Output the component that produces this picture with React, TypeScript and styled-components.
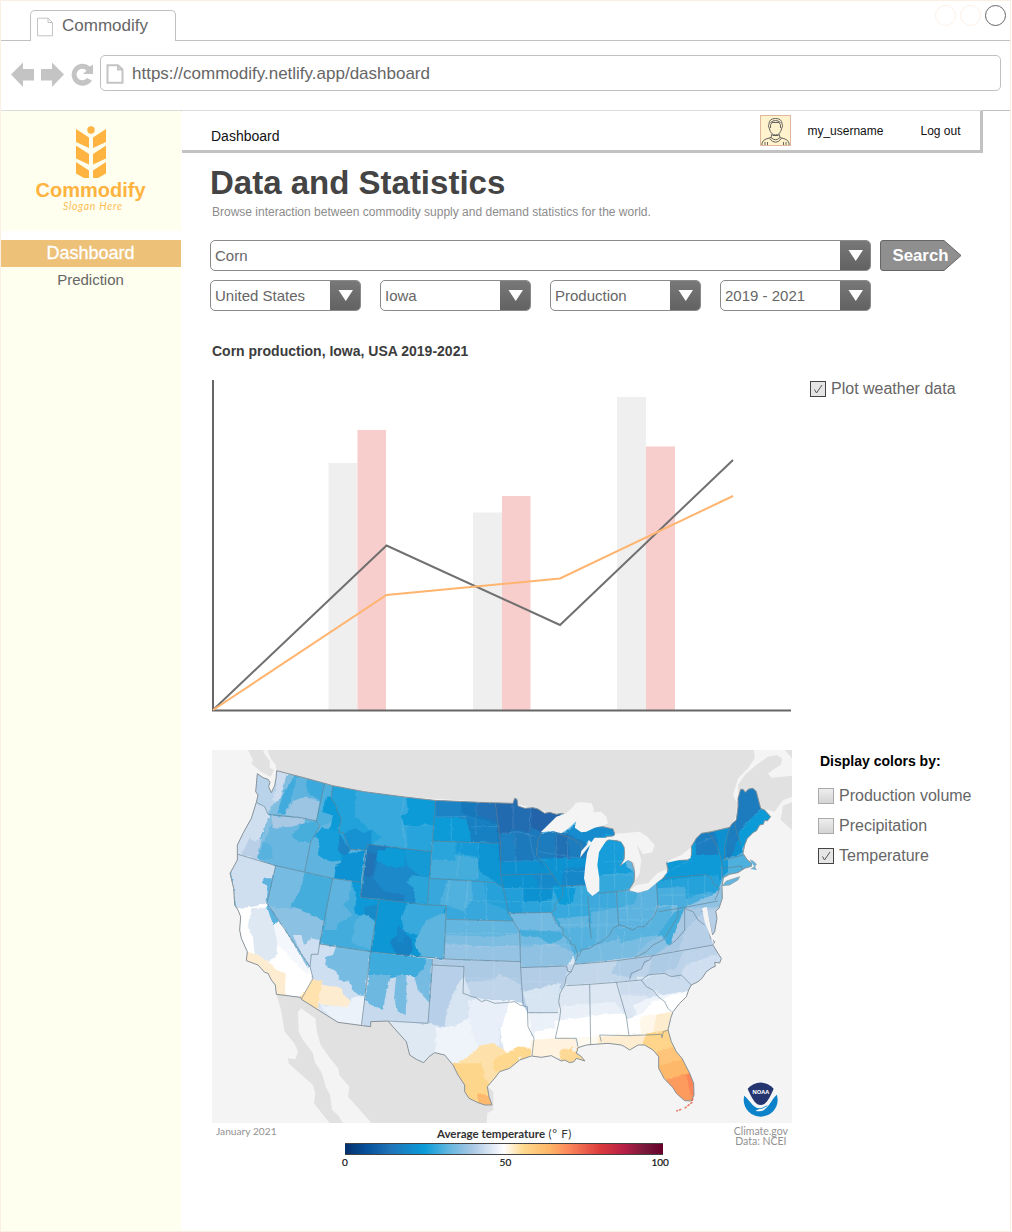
import React from "react";
import styled, { createGlobalStyle } from "styled-components";

const GlobalStyle = createGlobalStyle`
  * { box-sizing: border-box; }
  body { margin: 0; background: #fff; font-family: "Liberation Sans", Arial, sans-serif; color: #666; }
  svg { display: block; flex: none; }
`;

const Window = styled.div`
  width: 1011px;
  height: 1232px;
  border: 1px solid #fbeee2;
  background: #fff;
  display: flex;
  flex-direction: column;
`;

const TabStrip = styled.div`
  height: 40px;
  display: flex;
  justify-content: space-between;
  border-bottom: 1px solid #c0c0c0;
  padding: 0 4px 0 29px;
  flex: none;
`;

const Tab = styled.div`
  width: 146px;
  height: 31px;
  margin-top: 9px;
  border: 1px solid #c0c0c0;
  border-bottom: 0;
  border-radius: 5px 5px 0 0;
  background: #fff;
  display: flex;
  gap: 8px;
  padding: 6px 0 0 5px;
  font-size: 17px;
  line-height: 18px;
`;

const WindowButtons = styled.div`
  display: flex;
  gap: 4px;
  padding-top: 4px;
`;

const Circle = styled.span<{ $color: string }>`
  width: 21px;
  height: 21px;
  border-radius: 50%;
  border: 1px solid ${(p) => p.$color};
`;

const AddressRow = styled.div`
  height: 69px;
  flex: none;
  display: flex;
  align-items: flex-start;
  padding: 14px 9px 0 10px;
`;

const NavIcons = styled.div`
  width: 89px;
  padding-top: 7px;
`;

const AddressBar = styled.div`
  flex: 1;
  height: 36px;
  border: 1px solid #c0c0c0;
  border-radius: 5px;
  display: flex;
  align-items: center;
  gap: 8px;
  padding: 1px 0 0 5px;
  font-size: 17px;
`;

const Page = styled.div`
  flex: 1;
  display: flex;
`;

const Sidebar = styled.aside`
  width: 180px;
  display: flex;
  flex-direction: column;
  background: #feffee;
`;

const Brand = styled.div`
  height: 130px;
  border-bottom: 9px solid #fff;
  border-top: 1px solid #ddd;
  display: flex;
  flex-direction: column;
  align-items: center;
  padding: 15px 1px 0 0;
`;

const BrandName = styled.div`
  font-size: 20px;
  line-height: 22px;
  font-weight: bold;
  color: #ffb340;
`;

const SideItem = styled.a<{ $active?: boolean }>`
  height: 27px;
  line-height: 26px;
  padding-right: 1px;
  text-align: center;
  font-size: ${(p) => (p.$active ? 18 : 15)}px;
  color: ${(p) => (p.$active ? "#fff" : "#666")};
  background: ${(p) => (p.$active ? "#edc178" : "transparent")};
  -webkit-text-stroke: ${(p) => (p.$active ? "0.3px #fff" : "0")};
`;

const Main = styled.main`
  flex: 1;
  border-top: 1px solid #c0c0c0;
`;

const TopBar = styled.header`
  width: 801px;
  height: 43px;
  margin: -1px 0 0 1px;
  border-top: 1px solid #ddd;
  border-right: 3px solid #c2c2c2;
  border-bottom: 3px solid #c2c2c2;
  display: flex;
  align-items: center;
  font-size: 12px;
  line-height: 14px;
  color: #111;
  > svg { margin-bottom: 1px; }
`;

const Crumb = styled.span`
  font-size: 14px;
  line-height: 16px;
  padding: 11px 0 0 29px;
  flex: 1;
`;

const UserName = styled.span`
  margin: 0 37px 0 16px;
`;

const LogOut = styled.span`
  margin-right: 19.500px;
`;

const Content = styled.div`
  padding: 11px 0 0 28px;
`;

const Title = styled.h1`
  margin: 0 0 0 1px;
  font-size: 33px;
  line-height: 38px;
  color: #444;
`;

const Subtitle = styled.p`
  margin: 3px 0 0 3px;
  font-size: 12px;
  line-height: 14px;
  color: #8c8c8c;
`;

const FilterRow = styled.div<{ $top: number; $gap: number }>`
  display: flex;
  gap: ${(p) => p.$gap}px;
  margin: ${(p) => p.$top}px 0 0 1px;
`;

const SelectBox = styled.div<{ $width: number }>`
  width: ${(p) => p.$width}px;
  height: 31px;
  border: 1px solid #8a8a8a;
  border-radius: 5px;
  overflow: hidden;
  display: flex;
  justify-content: space-between;
  font-size: 15px;
  line-height: 30px;
  padding-left: 4px;
`;

const Arrow = styled.span`
  width: 30px;
  background: linear-gradient(#787878, #626262);
  display: flex;
  align-items: center;
  justify-content: center;
  padding-bottom: 1px;
`;

const SearchButton = styled.button`
  width: 82px;
  height: 31px;
  padding: 0;
  border: 0;
  background: none;
  display: grid;
  font: bold 16.800px/31px "Liberation Sans", Arial, sans-serif;
  color: #fff;
  text-align: left;
  > * { grid-area: 1 / 1; }
  > span { padding-left: 12.500px; }
`;

const ChartTitle = styled.h2`
  margin: 32px 0 0 3px;
  font-size: 14px;
  line-height: 16px;
  color: #3c3c3c;
`;

const Split = styled.div<{ $top: number; $gap: number }>`
  display: flex;
  align-items: flex-start;
  gap: ${(p) => p.$gap}px;
  margin: ${(p) => p.$top}px 0 0 3px;
`;

const Options = styled.div`
  display: flex;
  flex-direction: column;
`;

const OptionsTitle = styled.h3`
  margin: 3px 0 12px 2px;
  font-size: 14px;
  line-height: 16px;
  color: #000;
`;

const Check = styled.label<{ $compact?: boolean }>`
  height: ${(p) => (p.$compact ? 19 : 30)}px;
  display: flex;
  align-items: center;
  gap: 5px;
  font-size: 16px;
  white-space: nowrap;
`;

const Box = styled.span<{ $checked?: boolean }>`
  width: 16px;
  height: 16px;
  border: 1px solid ${(p) => (p.$checked ? "#444" : "#aaa")};
  background: ${(p) => (p.$checked ? "#e5e5e5" : "linear-gradient(#eee, #d4d4d4)")};
`;

const MapFigure = styled.figure`
  width: 580px;
  margin: 0;
  font-family: Lato, sans-serif;
`;

const MapFooter = styled.figcaption`
  display: flex;
  justify-content: space-between;
  padding: 3px 4px 0 4px;
  font-size: 10.500px;
  line-height: 10px;
  color: #929292;
`;

const Issued = styled.span`
  width: 66px;
  font-size: 10.200px;
  white-space: nowrap;
`;

const Legend = styled.div`
  width: 332px;
  margin-right: 4px;
`;

const LegendTitle = styled.div`
  font-size: 11.500px;
  line-height: 12px;
  font-weight: 700;
  color: #333;
  padding: 2px 0 3px 97px;
  white-space: pre;
  span { font-weight: 400; letter-spacing: 0.600px; }
`;

const Ramp = styled.div`
  width: 318px;
  height: 12px;
  margin-left: 5px;
  border: 1px solid #444;
  border-width: 1px 0;
  background: linear-gradient(90deg, #04306a 0%, #08519c 7%, #1f73b7 14%, #0a9bd8 25%, #5cb4df 32%, #a9c8e4 40%, #e6edf7 47%, #fff 50%, #fed98e 56%, #fdb768 64%, #fd8a5c 70%, #dc3c3c 80%, #b51e46 88%, #7a1a3c 94%, #67002a 100%);
`;

const Ticks = styled.div`
  display: grid;
  grid-template-columns: 1fr auto 1fr;
  padding: 2px 3px 0 2px;
  font-size: 10px;
  color: #111;
  -webkit-text-stroke: 0.200px #111;
  > :last-child { text-align: right; }
`;

const Credit = styled.div`
  text-align: center;
`;

const SheetIcon = ({ heavy = false }: { heavy?: boolean }) => (
  <svg width="18" height="20" viewBox="0 0 18 20" fill="none" stroke="#c4c4c4" strokeWidth={heavy ? 2 : 1}>
    <path d="M1.500 1.200H12L16.500 5.500V18.800H1.500Z M12 1.200V5.500H16.500" />
  </svg>
);

const Tick = () => (
  <svg width="14" height="14" viewBox="0 0 14 14" fill="none" stroke="#555" strokeWidth="1">
    <path d="M3.500 7.500L5.500 11L11 3" />
  </svg>
);

const Checkbox = ({ label, checked, compact }: { label: string; checked?: boolean; compact?: boolean }) => (
  <Check $compact={compact}>
    <Box $checked={checked}>{checked && <Tick />}</Box>
    {label}
  </Check>
);

const Select = ({ value, width }: { value: string; width: number }) => (
  <SelectBox $width={width}>
    {value}
    <Arrow>
      <svg width="15" height="11" viewBox="0 0 15 11"><path d="M.5 0H15L7.750 11Z" fill="#fff" /></svg>
    </Arrow>
  </SelectBox>
);

const Avatar = () => (
  <svg width="31" height="31" viewBox="0 0 31 31">
    <rect x=".5" y=".5" width="30" height="30" fill="#fff2cc" stroke="#e2b89c" />
    <g fill="none" stroke="#555" strokeWidth=".9">
      <path d="M2 30V28Q3 25 6 24L11 22.500L12 19M29 30V28Q28 25 25 24L20 22.500L19 19M11 22.500Q15.500 27 20 22.500M9.500 23.500Q15.500 31 21.500 23.500M5 30V27M26 30V27M7.500 27V30M23.500 27V30M12.500 20.500H18.500" />
      <path d="M9.500 14Q7.500 10 9 9Q9 3.500 15.500 3.500T22 9Q23.500 10 21.500 14Q20 20 15.500 20T9.500 14ZM10.500 13Q10 9 12 7.500H19Q21 9 20.500 13M10.500 7.500Q13 5.500 15.500 5.500T20.500 7.500" />
    </g>
  </svg>
);

const Wheat = () => (
  <svg width="32" height="53" viewBox="0 0 32 53" fill="#ffb340">
    <circle cx="16" cy="4" r="3.700" />
    <path d="M1 3L14 11.500V22L1 16ZM31 3L18 11.500V22L31 16ZM1 19.500L14 28V38.500L1 32.500ZM31 19.500L18 28V38.500L31 32.500ZM1 36L14 44.500V52H9L1 47.500ZM31 36L18 44.500V52H23L31 47.500Z" />
  </svg>
);

const Chart = () => (
  <svg width="580" height="334" viewBox="212 379 580 334" fill="none">
    <g fill="#efefef">
      <path d="M328.500 463H357.500V710H328.500ZM473 512.500H502V710H473ZM617 397H646V710H617Z" />
      <path fill="#f8cecc" d="M357.500 430H386V710H357.500ZM502 496H530.500V710H502ZM646 446.500H675V710H646Z" />
    </g>
    <path d="M213 380V711.500M212 710.500H791" stroke="#666" strokeWidth="2" />
    <path d="M213 710L386.500 545.500L560 625L733 460" stroke="#707070" strokeWidth="2" />
    <path d="M213 710L386.500 595L560 578.500L733 496" stroke="#ffb570" strokeWidth="2" />
  </svg>
);

const outline =
  "158,86 175,98 190,103 196,112 192,125 200,143 210,122 214,100 216,77 290,96 360,115 384,122 480,140 600,156 690,166 830,172 925,175 930,160 937,163 940,183 960,190 985,188 1000,192 1020,205 1035,202 1055,208 1072,205 1120,225 1160,245 1195,245 1225,252 1232,272 1205,275 1202,290 1215,283 1250,290 1260,310 1258,345 1246,362 1265,345 1280,348 1290,380 1288,410 1273,435 1300,442 1330,432 1355,410 1375,400 1390,375 1385,352 1410,345 1450,345 1460,330 1460,305 1475,280 1490,265 1520,260 1575,247 1583,235 1595,225 1600,185 1600,160 1608,133 1615,133 1622,142 1632,132 1645,130 1655,140 1668,190 1680,195 1698,215 1688,228 1680,226 1676,238 1665,240 1655,258 1646,262 1628,280 1620,300 1615,325 1628,345 1642,355 1640,364 1620,370 1600,383 1575,388 1556,398 1552,425 1553,460 1543,490 1533,498 1537,520 1530,560 1523,570 1515,535 1508,505 1500,515 1512,550 1518,580 1530,590 1525,600 1540,625 1550,640 1545,654 1530,652 1532,664 1522,668 1505,680 1492,700 1480,710 1460,720 1452,735 1445,755 1425,775 1405,800 1398,820 1390,855 1400,890 1415,920 1432,940 1455,985 1467,1015 1468,1050 1460,1068 1440,1067 1415,1045 1405,1028 1392,1015 1378,1000 1370,985 1362,970 1362,935 1345,915 1320,900 1300,900 1275,915 1260,905 1250,900 1210,895 1170,898 1145,900 1120,908 1115,925 1128,933 1141,948 1125,943 1115,940 1108,950 1095,953 1080,945 1070,948 1040,932 1010,937 980,933 945,945 915,970 885,980 868,1002 848,1025 853,1055 862,1080 840,1080 820,1073 793,1060 780,1040 780,1020 760,990 745,960 720,930 690,923 673,935 657,953 635,943 615,930 605,890 585,868 560,840 550,828 498,830 498,845 400,832 290,763 288,757 215,748 212,720 200,705 190,685 180,682 160,660 125,647 128,620 110,580 105,555 108,515 100,495 90,480 87,430 76,385 98,345 98,300 115,265 140,220 155,172 160,150 153,140";

const patches: [string, string][] = [
  ["#dce7f3", "0,640 1762,600 1762,900 560,1134 0,1134"],
  // Pacific Northwest
  ["#b9d3ea", "140,70 225,70 240,130 215,185 190,208 150,180"],
  ["#cddcee", "216,70 255,80 240,130 225,165 205,170 215,120"],
  ["#7fbde1", "245,90 275,90 255,145 230,210 190,208 200,180 228,165"],
  ["#3fabdc", "270,92 300,100 268,130 258,170 238,208 215,207 235,150"],
  ["#5eb4df", "275,100 310,90 310,145 345,165 335,200 265,165"],
  ["#3aa9dc", "307,90 360,115 350,168 308,142"],
  ["#9bc5e3", "265,168 300,155 345,170 335,228 240,210"],
  ["#cfdff0", "150,170 180,185 195,215 160,290 150,335 95,330 95,290"],
  ["#b9cfe8", "135,278 150,290 175,275 158,345 110,330"],
  ["#84bfe2", "190,220 210,210 198,245 182,290 160,345 168,290"],
  ["#69b7e0", "205,240 335,228 345,245 318,290 300,380 160,345 182,280"],
  ["#a9c8e4", "200,212 300,220 300,235 260,245 205,248"],
  ["#47aedc", "290,238 335,228 343,250 330,272 318,292 285,290 260,275"],
  ["#58b2de", "175,290 200,300 205,340 180,345 160,340"],
  // Idaho, Montana, Wyoming
  ["#4fb0dd", "360,110 384,122 380,160 405,215 345,245 335,228"],
  ["#0a9bd8", "365,150 385,160 412,220 400,260 375,260 385,210 352,200"],
  ["#5eb4df", "345,245 402,262 415,262 435,313 483,315 468,412 300,380 318,290"],
  ["#149edb", "350,250 402,255 415,262 435,313 430,345 370,350 340,330 345,285 328,275"],
  ["#0e93d3", "410,330 483,315 468,412 388,400 395,360 412,350"],
  ["#1b83c5", "405,270 418,268 438,315 420,333 400,315"],
  ["#23a2da", "384,120 600,150 595,315 490,298 435,313 402,262 410,220 380,160"],
  ["#37a9dc", "455,135 693,166 680,320 500,300 530,275 500,255 450,215"],
  ["#0b9bd8", "605,155 693,166 688,245 660,235 640,245 600,240 588,215 610,200"],
  ["#28a4db", "605,245 688,240 680,320 610,310"],
  ["#1292d2", "418,265 450,250 480,265 500,255 500,298 485,315 435,313"],
  ["#1b8aca", "490,298 680,320 668,480 468,457"],
  ["#1c7dbf", "490,298 555,308 520,320 520,345 505,400 540,440 600,450 598,470 468,457"],
  ["#2172b6", "488,320 515,330 508,380 495,398 478,390"],
  ["#0a9bd8", "520,318 560,308 600,315 600,365 550,365 515,345"],
  ["#159ad6", "600,313 680,320 672,400 640,390 605,360"],
  ["#2ba5da", "622,390 675,398 668,480 632,475 628,430 605,412"],
  // California, Nevada, Utah
  ["#cfdfef", "70,315 213,362 205,400 187,475 215,535 250,600 100,520"],
  ["#ffffff", "100,490 145,485 187,475 316,665 325,700 305,755 215,765 100,620"],
  ["#dde8f3", "140,490 185,485 210,530 220,580 215,635 185,650 150,625 145,580 130,540"],
  ["#f4f8fd", "205,533 240,540 320,665 310,690 220,600"],
  ["#5bb3df", "180,400 210,400 195,470 222,530 205,538 185,480 190,430 172,412"],
  ["#feecd0", "115,615 150,625 185,645 215,675 243,685 240,760 205,765 180,700 110,655"],
  ["#76bbe1", "213,362 384,400 345,595 240,550 187,475"],
  ["#45addc", "300,382 384,400 365,528 290,515 255,490 290,430"],
  ["#8bc1e2", "215,490 270,487 362,530 345,595 310,670 240,555 190,480"],
  ["#cddff0", "265,570 290,570 298,600 320,580 345,585 340,628 316,665 280,605"],
  ["#43addd", "384,400 470,412 468,457 523,463 500,620 345,595"],
  ["#5eb4df", "384,400 440,408 435,460 415,480 445,510 400,535 395,555 360,555 365,500"],
  ["#0f99d7", "440,405 470,412 468,457 523,463 515,530 450,505 455,460"],
  ["#198bca", "475,485 518,480 516,522 485,520"],
  ["#56b2de", "450,530 480,505 513,530 503,615 440,595"],
  // Colorado and the southwest
  ["#0a97d5", "523,463 725,482 718,642 498,620"],
  ["#1682c3", "555,590 590,560 620,580 625,615 610,635 575,630"],
  ["#1289ca", "580,540 605,560 592,595 575,590"],
  ["#37a9dc", "608,473 725,482 715,520 672,540 640,570 600,560 590,520"],
  ["#5bb4df", "665,525 725,500 718,642 650,635 630,600 640,570"],
  ["#cddff0", "345,597 395,605 470,750 470,842 290,763 325,700 316,665"],
  ["#76bce2", "395,603 498,620 480,750 450,745 432,710 405,705 395,680 362,660 365,635 385,630"],
  ["#ffe2ae", "322,703 352,705 340,795 280,763 305,735"],
  ["#feecd0", "350,718 375,724 405,725 418,750 435,765 432,788 340,777"],
  ["#ecf2fa", "335,770 340,780 430,785 440,760 480,750 470,850 400,842"],
  ["#c6d9ed", "498,620 683,642 670,845 550,838 498,850 470,842"],
  ["#76bce2", "620,635 683,642 675,775 640,735 630,700"],
  ["#3dabdc", "498,620 665,640 660,670 630,695 600,690 560,700 490,690"],
  ["#6cb8e0", "492,690 560,690 545,740 535,795 500,780 482,765"],
  ["#76bce2", "575,690 605,690 605,760 603,810 580,800 568,760"],
  // Northern plains
  ["#1b84c5", "693,166 872,175 888,295 685,288"],
  ["#0b9bd8", "690,215 785,220 800,245 800,290 685,288"],
  ["#1778bb", "770,168 872,175 882,240 840,230 815,220 770,205"],
  ["#2170b5", "815,170 872,175 878,230 815,210"],
  ["#1580c3", "785,220 838,225 885,240 888,295 800,290"],
  ["#2aa5db", "685,288 888,295 892,425 675,400"],
  ["#149ad7", "755,292 822,295 820,335 755,325"],
  ["#0a94d3", "822,293 888,295 892,425 815,372"],
  ["#45addc", "680,345 755,345 750,330 820,340 820,405 675,400"],
  ["#38a8dc", "675,400 835,410 892,425 910,500 925,528 725,523 725,482 668,478"],
  ["#51b1de", "730,405 800,408 805,460 780,500 725,482 705,478"],
  ["#27a1d9", "838,410 892,425 912,500 845,470"],
  ["#7ebde2", "725,523 925,528 945,560 947,650 718,642"],
  ["#64b6df", "725,523 925,528 945,565 880,575 720,570"],
  ["#94c3e3", "720,595 800,600 870,605 947,600 947,650 718,642"],
  // Minnesota, Wisconsin, Iowa and lakeside states
  ["#1b79bc", "872,170 1080,200 1010,262 995,330 1043,387 888,390"],
  ["#226bb0", "872,170 928,175 925,255 900,270 880,265"],
  ["#226db2", "925,150 985,185 980,262 925,255"],
  ["#2263a9", "983,185 1080,200 1010,262 980,245"],
  ["#1d82c3", "890,265 925,265 935,350 990,350 990,330 1043,387 888,390"],
  ["#0e90cf", "888,350 935,350 1000,345 1043,387 888,390"],
  ["#1e7bbe", "1005,265 1055,258 1145,280 1160,340 1150,430 1070,430 995,340"],
  ["#236fb4", "1050,270 1090,270 1095,345 1055,345"],
  ["#0e92d2", "1000,340 1150,340 1150,430 1060,425"],
  ["#1488ca", "1080,370 1145,365 1145,425 1070,420"],
  ["#168bcd", "1080,262 1120,235 1245,235 1235,282 1140,290"],
  ["#0d92d1", "888,390 1043,387 1075,440 1040,502 912,505 892,425"],
  ["#1789ca", "985,390 1043,387 1065,430 1010,435"],
  ["#219fd8", "890,430 955,430 955,505 912,505"],
  ["#2aa4da", "955,470 1010,470 1075,450 1045,502 955,505"],
  ["#37a9dc", "1045,425 1150,420 1178,560 1170,600 1110,630 1070,560 1040,500"],
  ["#0f9cd8", "1043,422 1110,430 1105,470 1065,480"],
  ["#62b5df", "1060,520 1178,510 1170,600 1110,630 1070,560"],
  ["#129dda", "1178,300 1205,265 1275,290 1265,365 1290,380 1290,440 1175,450"],
  ["#35a8db", "1178,390 1295,380 1295,440 1178,445"],
  ["#3da9dc", "1150,448 1235,440 1242,540 1230,590 1155,600"],
  ["#5fb4df", "1160,500 1235,490 1242,540 1230,590 1155,600"],
  ["#5bb3df", "1230,440 1355,410 1362,480 1330,545 1290,555 1240,540"],
  ["#45addc", "1230,440 1300,442 1290,475 1240,490"],
  // Northeast
  ["#0b9ad7", "1373,400 1390,375 1380,340 1450,340 1455,300 1490,260 1580,245 1550,370 1550,410 1355,410"],
  ["#1d7dc0", "1472,282 1495,262 1545,260 1540,330 1475,330"],
  ["#27a2da", "1355,408 1540,388 1552,420 1545,470 1362,500"],
  ["#48aedd", "1358,430 1440,425 1445,460 1510,440 1545,445 1545,475 1362,500"],
  ["#8fc2e3", "1445,485 1540,440 1553,400 1560,470 1532,495 1440,490"],
  ["#0b90d0", "1530,260 1580,245 1600,230 1615,330 1552,350"],
  ["#1c7dbf", "1575,240 1592,225 1605,270 1580,335 1558,345"],
  ["#1d7bbe", "1590,220 1602,120 1660,120 1672,190 1630,230 1600,265"],
  ["#0f9bd8", "1600,265 1640,220 1680,185 1710,215 1655,270 1610,310"],
  ["#4eb0dd", "1552,345 1615,325 1650,360 1570,395 1550,380"],
  ["#149ad7", "1550,345 1570,345 1570,380 1552,400"],
  // Missouri through Virginia
  ["#72bae1", "912,505 1040,502 1110,630 1085,663 948,668 945,560"],
  ["#45addc", "945,555 1070,560 1075,575 1040,600 1000,575 950,575"],
  ["#8fc2e2", "947,605 1050,595 1110,625 1085,663 948,668"],
  ["#54b2de", "1070,550 1175,550 1170,600 1110,630"],
  ["#78bce2", "1110,628 1170,600 1235,585 1250,545 1330,545 1355,480 1420,480 1400,560 1345,632 1110,665"],
  ["#58b3de", "1230,550 1330,545 1360,490 1400,480 1400,520 1370,570 1320,575 1250,595"],
  ["#41acdc", "1360,570 1410,500 1440,490 1440,520 1395,600 1355,600"],
  ["#8ac0e2", "1330,590 1370,570 1395,605 1355,635 1285,640"],
  ["#a9c8e4", "1395,600 1440,490 1555,485 1550,605 1345,632"],
  ["#b8cfe8", "1440,560 1500,495 1560,490 1555,610 1420,620"],
  // Southern plains
  ["#adcae5", "683,642 947,650 955,780 870,770 775,745 778,665 683,660"],
  ["#c0d5ea", "775,710 870,705 880,685 950,720 955,780 775,750"],
  ["#b7cfe8", "683,660 778,665 775,745 740,800 735,850 670,835"],
  ["#d7e4f1", "740,760 760,715 778,695 800,755 790,840 720,845 725,800"],
  ["#dfe9f4", "545,825 690,840 700,855 695,935 657,960 600,915"],
  ["#eff4fb", "695,850 760,840 850,780 890,800 870,900 790,945 745,960 690,935"],
  ["#e8eff8", "790,765 930,765 915,820 885,850 885,900 820,905 800,860"],
  ["#ffffff", "915,765 970,780 988,880 990,933 900,930 888,860"],
  ["#fee1aa", "790,935 830,900 870,895 905,920 982,910 985,940 900,990 830,1060 745,960"],
  ["#fdd68b", "735,955 830,955 840,1000 875,1050 875,1095 780,1090"],
  ["#fed88f", "870,940 945,905 985,910 985,940 910,985 865,975"],
  ["#fdb96d", "820,1045 850,1050 875,1095 815,1095"],
  // Deep south and the Atlantic coast
  ["#b4cde7", "948,668 1085,663 1100,680 1065,745 1060,800 970,803 955,780"],
  ["#d7e4f1", "955,740 1000,730 1070,715 1060,800 970,803"],
  ["#c3d7eb", "1090,660 1345,630 1290,695 1310,710 1075,725"],
  ["#aecbe5", "1240,645 1345,632 1280,700 1220,685"],
  ["#bdd3e9", "1345,632 1525,600 1560,645 1460,720 1380,685 1275,700"],
  ["#aecbe5", "1345,632 1435,620 1415,670 1330,690"],
  ["#cfdef0", "1425,700 1440,660 1560,620 1565,655 1465,735"],
  ["#eaf1f9", "970,803 1065,800 1052,880 1000,890 980,870"],
  ["#ffffff", "990,860 1052,850 1052,885 985,890"],
  ["#fff2df", "980,885 1110,875 1125,945 975,940"],
  ["#fed995", "1065,915 1120,905 1155,955 1095,965 1065,955"],
  ["#dce7f3", "1080,720 1310,705 1400,800 1265,850 1060,850"],
  ["#eaf0f8", "1062,785 1230,770 1260,810 1250,840 1055,850"],
  ["#ffffff", "1050,828 1120,820 1185,810 1265,805 1275,875 1052,880"],
  ["#fffaf0", "1115,880 1270,865 1270,910 1120,910"],
  ["#ccdcee", "1240,715 1330,705 1350,755 1250,750"],
  ["#cbdcee", "1310,705 1380,685 1470,720 1440,755 1370,750"],
  ["#eff4fb", "1350,755 1430,740 1440,765 1400,800 1300,820 1285,780"],
  ["#ffffff", "1340,770 1460,735 1410,825 1390,860 1270,870 1265,825 1320,800"],
  ["#fff8ea", "1305,815 1395,805 1390,860 1305,870"],
  ["#feeccf", "1355,808 1410,800 1395,865 1345,865"],
  ["#feedd0", "1180,875 1330,868 1330,925 1180,905"],
  ["#fed58b", "1325,865 1390,855 1420,905 1360,925 1310,905"],
  ["#fdc47a", "1355,920 1412,905 1450,955 1355,980"],
  ["#fdb969", "1355,965 1445,940 1465,990 1375,1015"],
  ["#fd9b5e", "1375,1010 1430,990 1465,980 1475,1080 1430,1080"],
  ["#fc8558", "1445,990 1475,980 1480,1060 1460,1060"],
];

const stateLines =
  "M155,172L180,185L190,208L235,213L290,218L335,228L360,115M335,228L345,245L318,290L300,380M100,328L213,362L384,400L470,412M384,122L380,160L395,185L398,200L410,220L402,262L415,262L435,313L483,315L468,457L523,463M483,315L490,298L680,320M213,362L187,475L316,665L325,700L305,735L290,763M384,400L345,595L340,628L320,628L316,665M345,597L498,620L718,642L947,650M523,463L498,620L470,842M523,463L668,480L693,166M685,288L888,295M872,175L888,295L888,390L912,505L945,560L948,668L955,780M675,400L835,410L870,413L892,425M668,480L725,482L718,642M725,523L925,528M888,390L1043,387L1058,410L1075,430L1073,455L1050,480L1052,495L1040,502L912,505M1010,262L1000,285L995,330L1020,355L1043,387M1050,262L1080,272L1110,285L1130,300L1133,335M1070,423L1150,420M1150,453L1155,540L1160,580M1178,445L1235,440L1273,435M1235,440L1242,540M1040,502L1055,535L1075,550L1075,570L1095,585L1098,597L1110,600L1118,625L1118,635L1108,660L1100,680L1085,695L1080,720L1066,745L1062,770L1068,795L1065,820L1052,880L1115,880L1120,905M1118,635L1125,630L1130,615L1155,610L1170,600L1190,590L1215,570L1225,550L1242,540L1260,545L1285,555L1300,545L1320,545L1350,510L1360,485L1355,410M1110,658L1235,647L1345,632L1525,600M948,668L1085,663L1090,680L1100,680M1085,722L1155,718L1235,712L1310,705L1330,690L1380,685L1400,695L1430,690L1460,720M1345,632L1335,645L1320,650L1310,672L1280,685L1275,703M1155,718L1158,900M1235,712L1265,815L1273,872L1370,868L1372,878L1376,860L1390,855M1273,872L1185,870L1190,890M1310,705L1325,725L1345,735L1360,755L1380,770L1390,790L1400,800M683,660L778,665L775,745L790,750L800,755L815,758L830,770L845,765L870,775L900,773L930,770L945,780L968,785L970,845L988,880L982,933M683,642L683,660L670,835L550,828M968,803L1060,803M1362,500L1440,487L1540,468M1355,410L1375,400L1505,388L1520,400L1525,415L1545,430L1538,450L1530,465M1290,638L1325,620L1345,600L1375,585L1395,555L1420,515L1420,490M1395,600L1415,585L1440,555L1440,490M1440,490L1465,500L1480,525L1500,540M1512,263L1540,310L1552,350L1552,400M1575,247L1560,300L1560,345L1615,330M1590,225L1595,260L1610,300M1553,370L1610,363L1615,380M1490,500L1505,495";

const divisionLines =
  "M600,156L590,210L605,310M740,220V290M770,295L755,400M822,295L820,405M815,172L813,270M693,215H785M800,245H885M925,178L925,250M980,190L975,260M890,265L940,260L995,275M930,265L935,385M970,260L990,345M888,350L1030,345M955,390L955,505M1010,388L1008,505M893,430L1065,430M902,470H1050M1055,270L1055,380M1090,275L1085,420M1000,320L1130,340M1065,380H1145M735,405L725,480M790,408L780,523M845,412L845,525M790,465L900,470M785,523V645M865,525V650M720,565H945M718,605H947M770,645V705M870,650L865,770M780,700H950M1010,505L1010,665M950,600H1110M1005,665L1010,800M955,710H1085M955,755H1065M1090,425L1095,600M1130,422L1130,605M1060,480L1150,480M1065,540H1155M1185,445L1180,590M1210,442L1205,580M1155,490H1235M1155,540H1240M1265,440L1270,550M1310,440L1310,545M1240,490H1355M1242,525H1330M1200,350H1260M1195,390H1290M1230,290V435M1400,400L1405,490M1450,395L1450,480M1500,390V475M1365,450H1545M1390,380L1450,350L1470,300L1530,275M1180,660L1180,715M1245,650V710M1185,600L1190,650M1260,560L1250,645M1310,565L1300,640M1120,725V875M1200,715L1215,870M1065,760L1240,750M1065,820L1260,800M1270,710L1300,865M1245,750L1370,745M1360,695L1350,860M1400,630L1390,685M1450,620L1445,705M1490,615L1485,690M1020,805V930M1050,860V932";

const UsMap = () => (
  <svg width="580" height="373" viewBox="22 15 1740 1119">
    <defs>
      <clipPath id="country"><polygon points={outline} /></clipPath>
      <filter id="ragged" x="-5%" y="-5%" width="110%" height="110%">
        <feTurbulence type="fractalNoise" baseFrequency="0.07" numOctaves="2" seed="4" result="noise" />
        <feDisplacementMap in="SourceGraphic" in2="noise" scale="10" xChannelSelector="R" yChannelSelector="G" />
      </filter>
    </defs>
    <rect x="22" y="15" width="1740" height="1119" fill="#f4f4f4" />
    <g fill="#e1e1e1">
      <path d="M130 15L145 45L140 55L165 78L198 95L208 75L195 68L196 50L178 25L176 15Z" />
      <path d="M188 15L198 40L212 58L216 77L384 122L600 156L925 175L1000 192L1160 250L1232 275L1273 435L1355 410L1460 305L1575 247L1592 220L1598 175L1585 150L1600 100L1630 70L1650 40L1648 15Z" />
      <path d="M1602 150L1600 120L1622 88L1655 60L1690 35L1715 30L1732 40L1730 58L1690 85L1700 98L1762 92V155L1735 165L1710 200L1670 190ZM1762 172L1735 182L1728 225L1762 255ZM1740 15L1762 40V15Z" />
      <path d="M215 748L228 790L240 860L268 893L280 920L272 943L250 940L252 955L285 985L325 1020L332 1045L328 1075L375 1134H414L400 1110L382 1095L376 1050L363 1025L352 985L330 950L325 925L295 885L282 860L280 800L290 790L310 805L332 820L337 860L348 900L380 945L401 970L404 990L434 1025L430 1055L448 1075L500 1134H846L848 1105L866 1095V1040L500 700Z" />
    </g>
    <g clipPath="url(#country)">
      <rect x="22" y="15" width="1740" height="1119" fill="#65b6df" />
      <g filter="url(#ragged)">
        {patches.map(([fill, points], i) => (
          <polygon key={i} points={points} fill={fill} />
        ))}
      </g>
      <path d={divisionLines} fill="none" stroke="#fff" strokeWidth="2" opacity=".17" filter="url(#ragged)" />
      <path d={stateLines} fill="none" stroke="#64808f" strokeWidth="3" opacity=".62" strokeLinejoin="round" />
    </g>
    <polygon points={outline} fill="none" stroke="#8d9499" strokeWidth="3" strokeLinejoin="round" />
    <g fill="#f4f4f4">
      <path d="M1008 262L1030 240L1055 215L1085 205L1105 185L1112 175L1125 172L1160 174L1168 192L1165 202L1190 200L1205 215L1210 235L1195 242L1170 248L1145 260L1130 262L1110 248L1115 228L1092 250L1070 265L1045 258Z" />
      <path d="M1126 338L1130 318L1148 298L1152 285L1160 292L1170 278L1205 278L1238 274L1230 285L1208 283L1190 310L1183 322L1178 360L1184 400L1184 438L1163 453L1148 438L1138 400L1142 360L1147 325L1158 297Z" />
      <path d="M1225 278L1232 266L1270 263L1305 260L1328 275L1350 300L1343 322L1315 328L1296 298L1310 345L1305 385L1293 405L1290 355L1270 345L1250 360L1262 340L1260 305L1250 290Z" />
      <path d="M1384 354L1395 345L1430 330L1445 318L1457 308L1458 340L1420 346Z M1274 436L1295 420L1330 415L1358 385L1382 374L1388 382L1370 402L1330 435L1300 443Z" />
      <path d="M1492 490L1506 485L1520 555L1528 605L1518 575L1500 530ZM940 938L950 933L945 945ZM1101 910L1113 905L1116 918L1104 920Z" />
    </g>
    <path d="M1553 422L1565 408L1605 395L1600 405L1575 420ZM1638 372L1650 365L1655 375M1636 345L1645 348L1655 357L1650 366" fill="#65b6df" stroke="#8b9aa3" strokeWidth="2" />
    <path d="M1465 1060L1462 1072L1440 1090M1430 1093L1415 1098" fill="none" stroke="#e86e56" strokeWidth="4" strokeDasharray="8 3" />
    <g>
      <circle cx="1668" cy="1064" r="51" fill="#0b82c9" />
      <path d="M1612 1047L1628 1010H1708L1724 1043C1702 1058 1698 1080 1678 1095Q1668 1101 1652 1097L1664 1092C1640 1084 1634 1062 1612 1047Z" fill="#f6f6f6" />
      <path d="M1629 1031A51 51 0 0 1 1707 1031C1698 1052 1690 1068 1679 1077Q1668 1083 1657 1077C1646 1068 1638 1052 1629 1031Z" fill="#24356f" />
      <path d="M1655 1091Q1672 1094 1688 1082" fill="none" stroke="#0b82c9" strokeWidth="2.500" />
      <text x="1668" y="1048" fill="#fff" fontFamily="Open Sans, sans-serif" fontWeight="bold" fontSize="17" textAnchor="middle">NOAA</text>
    </g>
  </svg>
);

export default function App() {
  return (
    <>
      <GlobalStyle />
      <Window>
        <TabStrip>
          <Tab><SheetIcon />Commodify</Tab>
          <WindowButtons>
            <Circle $color="#fdf1e7" />
            <Circle $color="#fdf1e7" />
            <Circle $color="#666" />
          </WindowButtons>
        </TabStrip>
        <AddressRow>
          <NavIcons>
            <svg width="84" height="26" viewBox="0 0 84 26" fill="#c4c4c4">
              <path d="M0 12.500L12 .5V7H23V18.500H12V25ZM53 12.500L41 .5V7H30V18.500H41V25Z" />
              <path d="M79 4.500L82 2.500V12H72L75.500 8.500A5.800 5.800 0 1 0 76 16L81 18.500A11 11 0 1 1 79 4.500Z" />
            </svg>
          </NavIcons>
          <AddressBar><SheetIcon heavy />https://commodify.netlify.app/dashboard</AddressBar>
        </AddressRow>
        <Page>
          <Sidebar>
            <Brand>
              <Wheat />
              <BrandName>Commodify</BrandName>
              <svg width="64" height="14" viewBox="0 0 64 14">
                <text x="4" y="8.500" fill="#ffbd58" fontFamily="Lato, sans-serif" fontStyle="italic" fontSize="10.500" textLength="59">Slogan Here</text>
              </svg>
            </Brand>
            <SideItem $active>Dashboard</SideItem>
            <SideItem>Prediction</SideItem>
          </Sidebar>
          <Main>
            <TopBar>
              <Crumb>Dashboard</Crumb>
              <Avatar />
              <UserName>my_username</UserName>
              <LogOut>Log out</LogOut>
            </TopBar>
            <Content>
              <Title>Data and Statistics</Title>
              <Subtitle>Browse interaction between commodity supply and demand statistics for the world.</Subtitle>
              <FilterRow $top={21} $gap={9}>
                <Select value="Corn" width={661} />
                <SearchButton>
                  <svg width="82" height="31" viewBox="0 0 82 31">
                    <path d="M3 .5H64L81 15.500L64 30.500H3Q.5 30.500 .5 28V3Q.5 .5 3 .5Z" fill="#8f8f8f" stroke="#666" />
                  </svg>
                  <span>Search</span>
                </SearchButton>
              </FilterRow>
              <FilterRow $top={9} $gap={19}>
                <Select value="United States" width={151} />
                <Select value="Iowa" width={151} />
                <Select value="Production" width={151} />
                <Select value="2019 - 2021" width={151} />
              </FilterRow>
              <ChartTitle>Corn production, Iowa, USA 2019-2021</ChartTitle>
              <Split $top={20} $gap={18}>
                <Chart />
                <Options><Checkbox label="Plot weather data" checked compact /></Options>
              </Split>
              <Split $top={37} $gap={26}>
                <MapFigure>
                  <UsMap />
                  <MapFooter>
                    <Issued>January 2021</Issued>
                    <Legend>
                      <LegendTitle>Average temperature<span> (° F)</span></LegendTitle>
                      <Ramp />
                      <Ticks><span>0</span><span>50</span><span>100</span></Ticks>
                    </Legend>
                    <Credit>Climate.gov<br />Data: NCEI</Credit>
                  </MapFooter>
                </MapFigure>
                <Options>
                  <OptionsTitle>Display colors by:</OptionsTitle>
                  <Checkbox label="Production volume" />
                  <Checkbox label="Precipitation" />
                  <Checkbox label="Temperature" checked />
                </Options>
              </Split>
            </Content>
          </Main>
        </Page>
      </Window>
    </>
  );
}
